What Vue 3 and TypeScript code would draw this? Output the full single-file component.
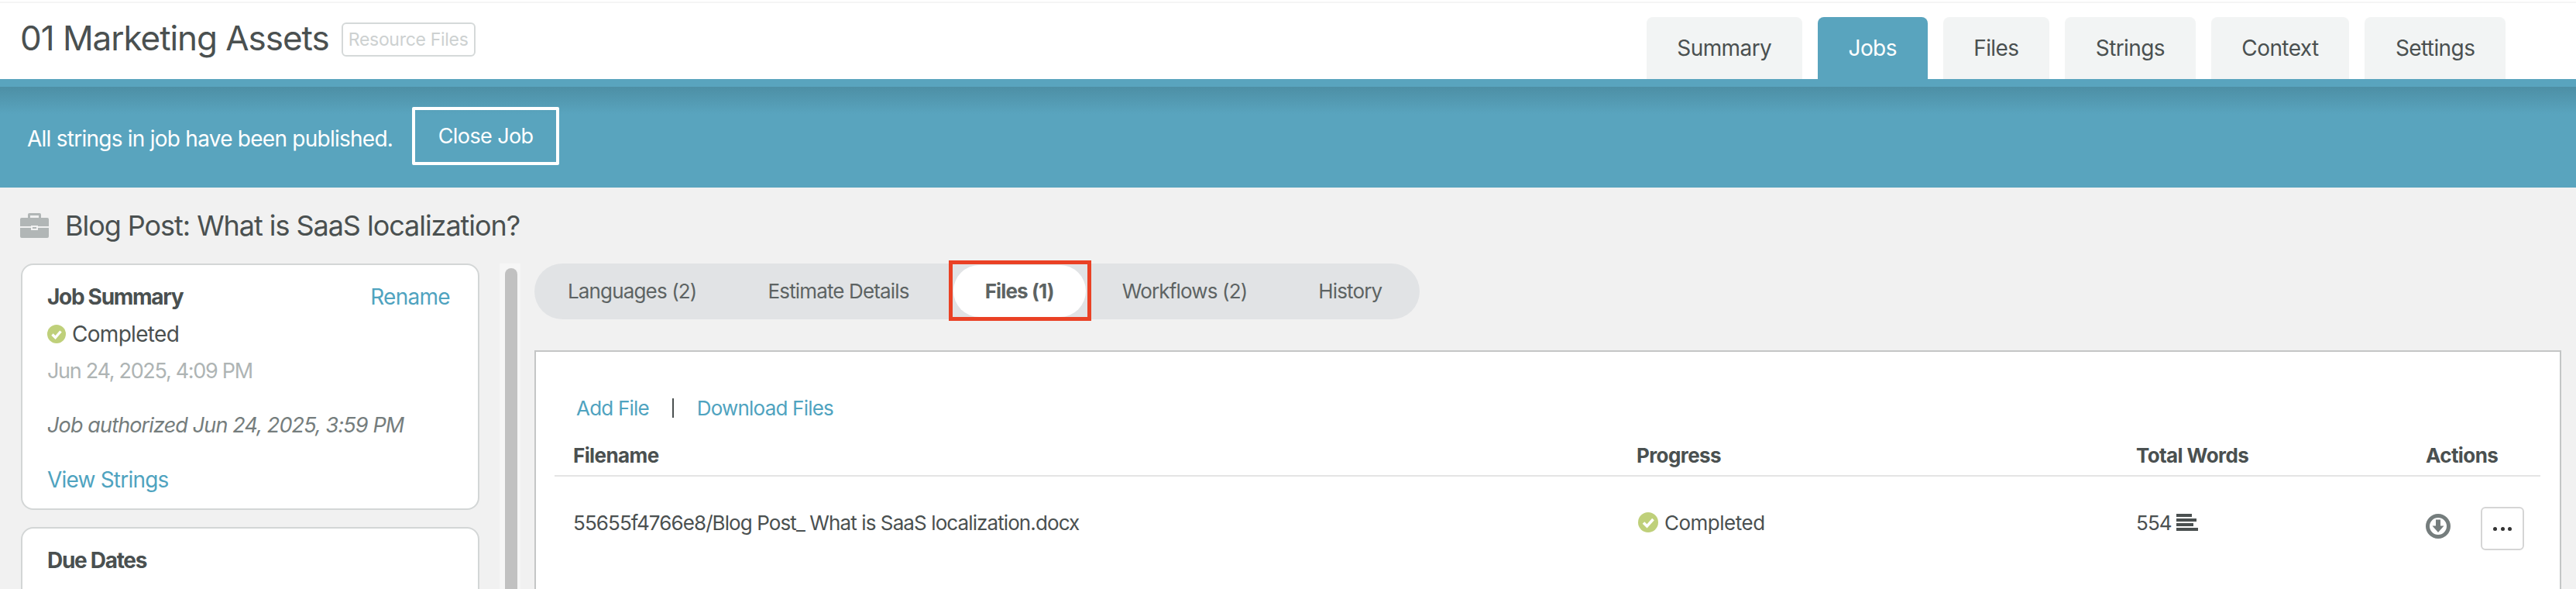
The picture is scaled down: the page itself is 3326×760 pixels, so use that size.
<script setup lang="ts">
const projectTabs = ['Summary', 'Jobs', 'Files', 'Strings', 'Context', 'Settings']
const jobTabs = ['Languages (2)', 'Estimate Details', 'Files (1)', 'Workflows (2)', 'History']
</script>

<template>
  <div class="page">
    <header class="top">
      <div class="project">
        <h1>01 Marketing Assets</h1>
        <span class="badge">Resource Files</span>
      </div>
      <nav class="project-tabs">
        <a v-for="tab in projectTabs" :key="tab" class="project-tab" :class="{ active: tab === 'Jobs' }">{{ tab }}</a>
      </nav>
    </header>

    <div class="banner">
      <span>All strings in job have been published.</span>
      <button class="close-btn">Close Job</button>
    </div>

    <main class="content">
      <div class="job-title">
        <svg class="briefcase" viewBox="0 0 37 32" width="37" height="32">
          <path fill="#b1b6b6" d="M12 0h13a2 2 0 0 1 2 2v4h8a2 2 0 0 1 2 2v9H23v-1h-9v1H0V8a2 2 0 0 1 2-2h8V2a2 2 0 0 1 2-2zm1 3v3h11V3H13z" />
          <path fill="#b1b6b6" d="M0 19h14v3h9v-3h14v11a2 2 0 0 1-2 2H2a2 2 0 0 1-2-2V19z" />
          <path fill="#b1b6b6" d="M16 18h5v2h-5z" />
        </svg>
        <h2>Blog Post: What is SaaS localization?</h2>
      </div>

      <div class="columns">
        <aside class="sidebar">
          <section class="card summary">
            <div class="card-head">
              <strong>Job Summary</strong>
              <a class="link">Rename</a>
            </div>
            <div class="status">
              <svg class="check" viewBox="0 0 24 24" width="24" height="24">
                <circle cx="12" cy="12" r="12" fill="#bfd07a" />
                <path d="M6.5 12.5l4 4 7-8" fill="none" stroke="#fff" stroke-width="3.4" />
              </svg>
              Completed
            </div>
            <div class="date">Jun 24, 2025, 4:09 PM</div>
            <div class="authorized">Job authorized Jun 24, 2025, 3:59 PM</div>
            <a class="link">View Strings</a>
          </section>
          <section class="card">
            <div class="card-head"><strong>Due Dates</strong></div>
          </section>
        </aside>

        <div class="scrollbar"><div class="thumb"></div></div>

        <div class="main">
          <nav class="job-tabs">
            <a v-for="tab in jobTabs" :key="tab" class="job-tab" :class="{ active: tab === 'Files (1)' }">
              {{ tab }}
              <span v-if="tab === 'Files (1)'" class="highlight"></span>
            </a>
          </nav>

          <div class="panel">
            <div class="file-actions">
              <a class="link">Add File</a>
              <span class="sep"></span>
              <a class="link">Download Files</a>
            </div>
            <div class="file-grid head">
              <span>Filename</span>
              <span>Progress</span>
              <span>Total Words</span>
              <span>Actions</span>
            </div>
            <div class="file-grid row">
              <span class="name">55655f4766e8/Blog Post_ What is SaaS localization.docx</span>
              <span class="progress">
                <svg viewBox="0 0 26 26" width="26" height="26">
                  <circle cx="13" cy="13" r="13" fill="#bfd07a" />
                  <path d="M7 13.5l4.500 4.500 8-9" fill="none" stroke="#fff" stroke-width="3.600" />
                </svg>
                Completed
              </span>
              <span class="words">
                554
                <svg viewBox="0 0 28 22" width="28" height="22">
                  <rect x="0" y="0" width="20" height="4" fill="#4a5050" />
                  <rect x="0" y="6" width="26" height="4" fill="#4a5050" />
                  <rect x="0" y="12" width="22" height="4" fill="#4a5050" />
                  <rect x="0" y="18" width="28" height="4" fill="#4a5050" />
                </svg>
              </span>
              <span class="actions">
                <svg class="download" viewBox="0 0 32 32" width="32" height="32">
                  <circle cx="16" cy="16" r="13.500" fill="none" stroke="#757d7d" stroke-width="5" />
                  <path fill="#757d7d" d="M13 7.500h6v8h4.500L16 24l-7.500-8.500H13z" />
                </svg>
                <button class="more" aria-label="More actions">
                  <i></i><i></i><i></i>
                </button>
              </span>
            </div>
          </div>
        </div>
      </div>
    </main>
  </div>
</template>

<style>
html,
body {
  margin: 0;
  overflow: hidden;
}
</style>

<style scoped>
.page {
  width: 3326px;
  height: 760px;
  overflow: hidden;
  background: #f1f1f1;
  color: #4a5050;
  font-family: Inter, "Liberation Sans", sans-serif;
  font-size: 26px;
}

/* header */
.top {
  height: 102px;
  box-sizing: border-box;
  background: #fff;
  border-top: 2px solid #fff;
  box-shadow: inset 0 2px 0 #f5f5f5;
  display: flex;
  justify-content: space-between;
  padding: 0 91px 0 26px;
}

.project {
  display: flex;
  align-items: center;
  gap: 16px;
  height: 94px;
}

h1 {
  margin: 0;
  font-size: 44px;
  font-weight: 400;
  letter-spacing: -1.05px;
}

.badge {
  box-sizing: border-box;
  width: 173px;
  height: 44px;
  margin-top: 4px;
  display: flex;
  align-items: center;
  justify-content: center;
  white-space: nowrap;
  border: 2px solid #d5d9d9;
  border-radius: 6px;
  color: #cdd1d1;
  font-size: 23px;
  letter-spacing: -0.3px;
}

.project-tabs {
  display: flex;
  gap: 20px;
  align-self: flex-end;
}

.project-tab {
  height: 80px;
  box-sizing: border-box;
  padding: 0 39.7px;
  display: flex;
  align-items: center;
  border-radius: 8px 8px 0 0;
  background: #f2f4f4;
  font-size: 28px;
  letter-spacing: -0.6px;
}

.project-tab.active {
  background: #59a4be;
  color: #fff;
}

/* banner */
.banner {
  height: 140px;
  box-sizing: border-box;
  padding: 14px 0 0 35px;
  display: flex;
  align-items: center;
  gap: 25px;
  color: #fff;
  font-size: 28px;
  letter-spacing: -0.75px;
  background: linear-gradient(#59a4be 0 10px, #4d8fa5 10px, #59a4be 45px);
}

.close-btn {
  width: 190px;
  height: 75px;
  margin-top: -8px;
  background: transparent;
  border: 4px solid #fff;
  border-radius: 2px;
  color: #fff;
  font-family: inherit;
  font-size: 27px;
  letter-spacing: -0.6px;
}

/* job */
.content {
  padding: 0 0 0 27px;
}

.job-title {
  height: 98px;
  margin-left: -1px;
  display: flex;
  align-items: center;
  gap: 21px;
}

.job-title h2 {
  margin: 0;
  font-size: 36px;
  font-weight: 400;
  letter-spacing: -1.05px;
}

.columns {
  display: flex;
  align-items: flex-start;
}

.sidebar {
  width: 592px;
  display: flex;
  flex-direction: column;
  gap: 22px;
}

.card {
  box-sizing: border-box;
  height: 200px;
  padding: 23px 36px 0 32px;
  background: #fff;
  border: 2px solid #d3d6d6;
  border-radius: 16px;
  font-size: 28px;
  letter-spacing: -0.7px;
}

.card.summary {
  height: 318px;
}

.card-head {
  display: flex;
  justify-content: space-between;
  line-height: 36px;
}

.card-head strong {
  font-weight: 700;
  letter-spacing: -1.3px;
}

.link {
  color: #4fa3bf;
}

.status {
  display: flex;
  align-items: center;
  gap: 8px;
  margin-top: 12px;
  line-height: 36px;
}

.date {
  margin-top: 12px;
  line-height: 36px;
  font-size: 27px;
  letter-spacing: -1.3px;
  color: #aeb4b4;
}

.authorized {
  margin: 34px 0;
  line-height: 36px;
  font-size: 27px;
  letter-spacing: -0.86px;
  font-style: italic;
  color: #757d7d;
}

.summary > .link {
  display: block;
  line-height: 36px;
  letter-spacing: -0.8px;
}

.scrollbar {
  width: 27px;
  height: 420px;
  margin-left: 26px;
  box-sizing: border-box;
  padding: 6px 4px 0 7px;
  background: #f6f6f6;
}

.thumb {
  height: 100%;
  border-radius: 8px 8px 0 0;
  background: #c1c1c1;
}

/* job tabs */
.main {
  margin-left: 18px;
  width: 2617px;
}

.job-tabs {
  display: flex;
  box-sizing: border-box;
  width: 1143px;
  height: 72px;
  padding: 2px 0 3px;
  border-radius: 36px;
  background: #e1e3e5;
  font-size: 26px;
  letter-spacing: -0.85px;
}

.job-tab {
  position: relative;
  display: flex;
  align-items: center;
  flex: none;
  white-space: nowrap;
  padding: 0 46px;
  color: #5d6363;
  border-radius: 34px;
}

.job-tab:first-child {
  padding-left: 43px;
}

.job-tab.active {
  margin: 0 1px 0 11px;
  padding: 0 41px;
  background: #fff;
  font-weight: 700;
}

.highlight {
  position: absolute;
  inset: -6px -7px -5px -6px;
  border: 5px solid #ea4125;
}

/* files panel */
.panel {
  box-sizing: border-box;
  height: 340px;
  margin-top: 40px;
  padding: 0 25px 0 24px;
  background: #fff;
  border: 2px solid #c4c6c6;
}

.file-actions {
  height: 56px;
  margin-top: 44px;
  padding-left: 28px;
  display: flex;
  align-items: center;
  letter-spacing: -0.8px;
}

.sep {
  width: 2px;
  height: 25px;
  margin: 0 30px;
  background: #4a5050;
}

.file-grid {
  display: grid;
  grid-template-columns: 1373px 645px 374px 1fr;
  padding-left: 24px;
}

.file-grid.head {
  height: 61px;
  padding-top: 7px;
  box-sizing: border-box;
  align-items: center;
  border-bottom: 2px solid #e4e4e4;
  font-weight: 700;
  letter-spacing: -0.6px;
}

.file-grid.row {
  height: 118px;
  align-items: center;
}

.name {
  letter-spacing: -0.9px;
}

.progress,
.words,
.actions {
  display: flex;
  align-items: center;
}

.progress {
  gap: 8px;
  padding-left: 2px;
  letter-spacing: -0.5px;
}

.words {
  gap: 6px;
  letter-spacing: -0.9px;
}

.actions {
  gap: 39px;
  margin-top: 16px;
}

.download {
  margin-top: -6px;
}

.more {
  box-sizing: border-box;
  width: 56px;
  height: 56px;
  padding: 0;
  display: flex;
  align-items: center;
  justify-content: center;
  gap: 4.5px;
  background: #fff;
  border: 2px solid #d5d5d5;
  border-radius: 6px;
}

.more i {
  width: 5px;
  height: 5px;
  border-radius: 50%;
  background: #333;
}
</style>
